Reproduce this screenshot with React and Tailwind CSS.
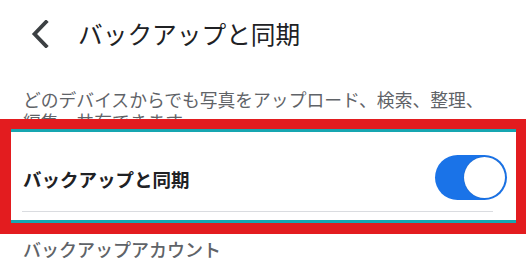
export default function App() {
  return (
    <div
      className="w-[529px] h-[267px] bg-white overflow-hidden"
      style={{ fontFamily: '"Noto Sans CJK JP", "Noto Sans", sans-serif' }}
    >
      {/* header */}
      <div className="h-[67px] flex items-center pl-[31px]">
        <svg width="18" height="28" viewBox="0 0 18 28" fill="none">
          <polyline
            points="15,2 3.5,14 15,26"
            stroke="#3c4043"
            strokeWidth="3.8"
            strokeLinecap="square"
            strokeLinejoin="miter"
          />
        </svg>
        <h1 className="ml-[29px] text-[24.7px] leading-none text-[#202124] font-normal">
          バックアップと同期
        </h1>
      </div>

      {/* description (second line is hidden under the highlight) */}
      <div className="h-[52px] overflow-hidden pt-[21px] pl-[23px]">
        <p className="text-[17.8px] leading-[22px] text-[#5f6368] whitespace-nowrap">
          どのデバイスからでも写真をアップロード、検索、整理、
          <br />
          編集、共有できます。
        </p>
      </div>

      {/* highlighted setting */}
      <div className="w-[526px] border-[#e31c1f] border-t-[10px] border-l-[11px] border-r-[10px] border-b-[11px] bg-white">
        <div className="h-[3px] bg-[#17a6b1]" />
        <div className="flex items-center justify-between pt-[23px] pb-[11px] pl-[12px] pr-[9px]">
          <span className="text-[18.5px] leading-none font-bold text-[#202124] mt-[3px]">
            バックアップと同期
          </span>
          <div className="w-[72px] h-[45px] rounded-full bg-[#1a73e8] flex items-center justify-end p-[2px]">
            <div className="w-[41px] h-[41px] rounded-full bg-white shadow-[0_0_1px_rgba(0,0,0,0.3)]" />
          </div>
        </div>
        <div className="ml-[11px] w-[471px] h-px bg-[#dadce0]" />
        <div className="h-[8px]" />
        <div className="h-[3px] bg-[#17a6b1]" />
      </div>

      {/* next section */}
      <div className="pt-[4px] pl-[23px]">
        <span className="text-[18px] leading-[22px] font-medium text-[#5f6368]">
          バックアップアカウント
        </span>
      </div>
    </div>
  );
}
